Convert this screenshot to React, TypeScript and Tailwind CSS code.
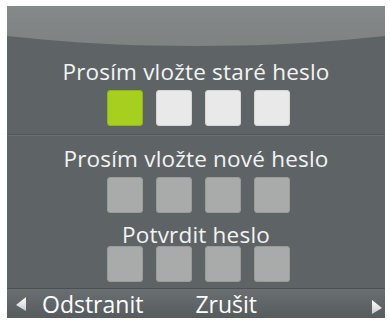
import React from "react";

const font = { fontFamily: '"Open Sans", "Noto Sans", "Liberation Sans", sans-serif' };

function Boxes({ kind }: { kind: "first" | "gray" }) {
  const cls =
    kind === "first"
      ? ["bg-[#a6cf1f] border-[#8fb519]", "bg-[#e9e9e9] border-[#d6d6d6]", "bg-[#e9e9e9] border-[#d6d6d6]", "bg-[#e9e9e9] border-[#d6d6d6]"]
      : ["bg-[#a9abab] border-[#9a9c9c]", "bg-[#a9abab] border-[#9a9c9c]", "bg-[#a9abab] border-[#9a9c9c]", "bg-[#a9abab] border-[#9a9c9c]"];
  return (
    <div className="flex justify-center gap-[13px] pl-[5px]">
      {cls.map((c, i) => (
        <div key={i} className={`w-[36px] h-[36px] rounded-[3px] border ${c}`} />
      ))}
    </div>
  );
}

export default function App() {
  return (
    <div className="w-[390px] h-[321px] bg-white pt-[6px] pl-[7px]" style={font}>
      <div className="relative w-[378px] h-[312px] bg-[#5e6466] overflow-hidden flex flex-col">
        <div className="absolute left-[-211px] top-[-128px] w-[800px] h-[168px] rounded-[50%] bg-gradient-to-b from-[#9a9d9e] to-[#7e8283]" />
        <div className="relative flex flex-col">
          <div className="h-[52px]" />
          <div className="text-center text-[22.5px] leading-[28px] tracking-[0.2px] text-[#f3f3f3]">Prosím vložte staré heslo</div>
          <div className="mt-[4px]">
            <Boxes kind="first" />
          </div>
          <div className="mt-[8px] h-[1px] bg-[#525759]" />
          <div className="h-[1px] bg-[#6b7072]" />
          <div className="mt-[9px] text-center text-[22.5px] leading-[28px] tracking-[0.2px] text-[#f3f3f3]">Prosím vložte nové heslo</div>
          <div className="mt-[4px]">
            <Boxes kind="gray" />
          </div>
          <div className="mt-[8px] text-center text-[22.5px] leading-[28px] tracking-[0.2px] text-[#f3f3f3]">Potvrdit heslo</div>
          <div className="mt-[-3px]">
            <Boxes kind="gray" />
          </div>
        </div>
        <div className="relative mt-auto h-[30px] border-t border-[#4b5052] bg-gradient-to-b from-[#6a6f71] to-[#565b5d] flex items-center">
          <svg width="12" height="16" viewBox="0 0 12 16" className="ml-[8px]">
            <defs>
              <linearGradient id="gl" x1="0" y1="0" x2="0" y2="1">
                <stop offset="0" stopColor="#ffffff" />
                <stop offset="1" stopColor="#c9cbcc" />
              </linearGradient>
            </defs>
            <polygon points="11,1 11,15 1,9" fill="url(#gl)" />
          </svg>
          <span className="ml-[15px] text-[23px] leading-[28px] text-white">Odstranit</span>
          <span className="ml-[52px] text-[23px] leading-[28px] text-white">Zrušit</span>
          <svg width="12" height="16" viewBox="0 0 12 16" className="ml-auto mr-[2px] mt-[6px]">
            <defs>
              <linearGradient id="gr" x1="0" y1="0" x2="0" y2="1">
                <stop offset="0" stopColor="#ffffff" />
                <stop offset="1" stopColor="#c9cbcc" />
              </linearGradient>
            </defs>
            <polygon points="1,1 1,15 11,9" fill="url(#gr)" />
          </svg>
        </div>
      </div>
    </div>
  );
}
